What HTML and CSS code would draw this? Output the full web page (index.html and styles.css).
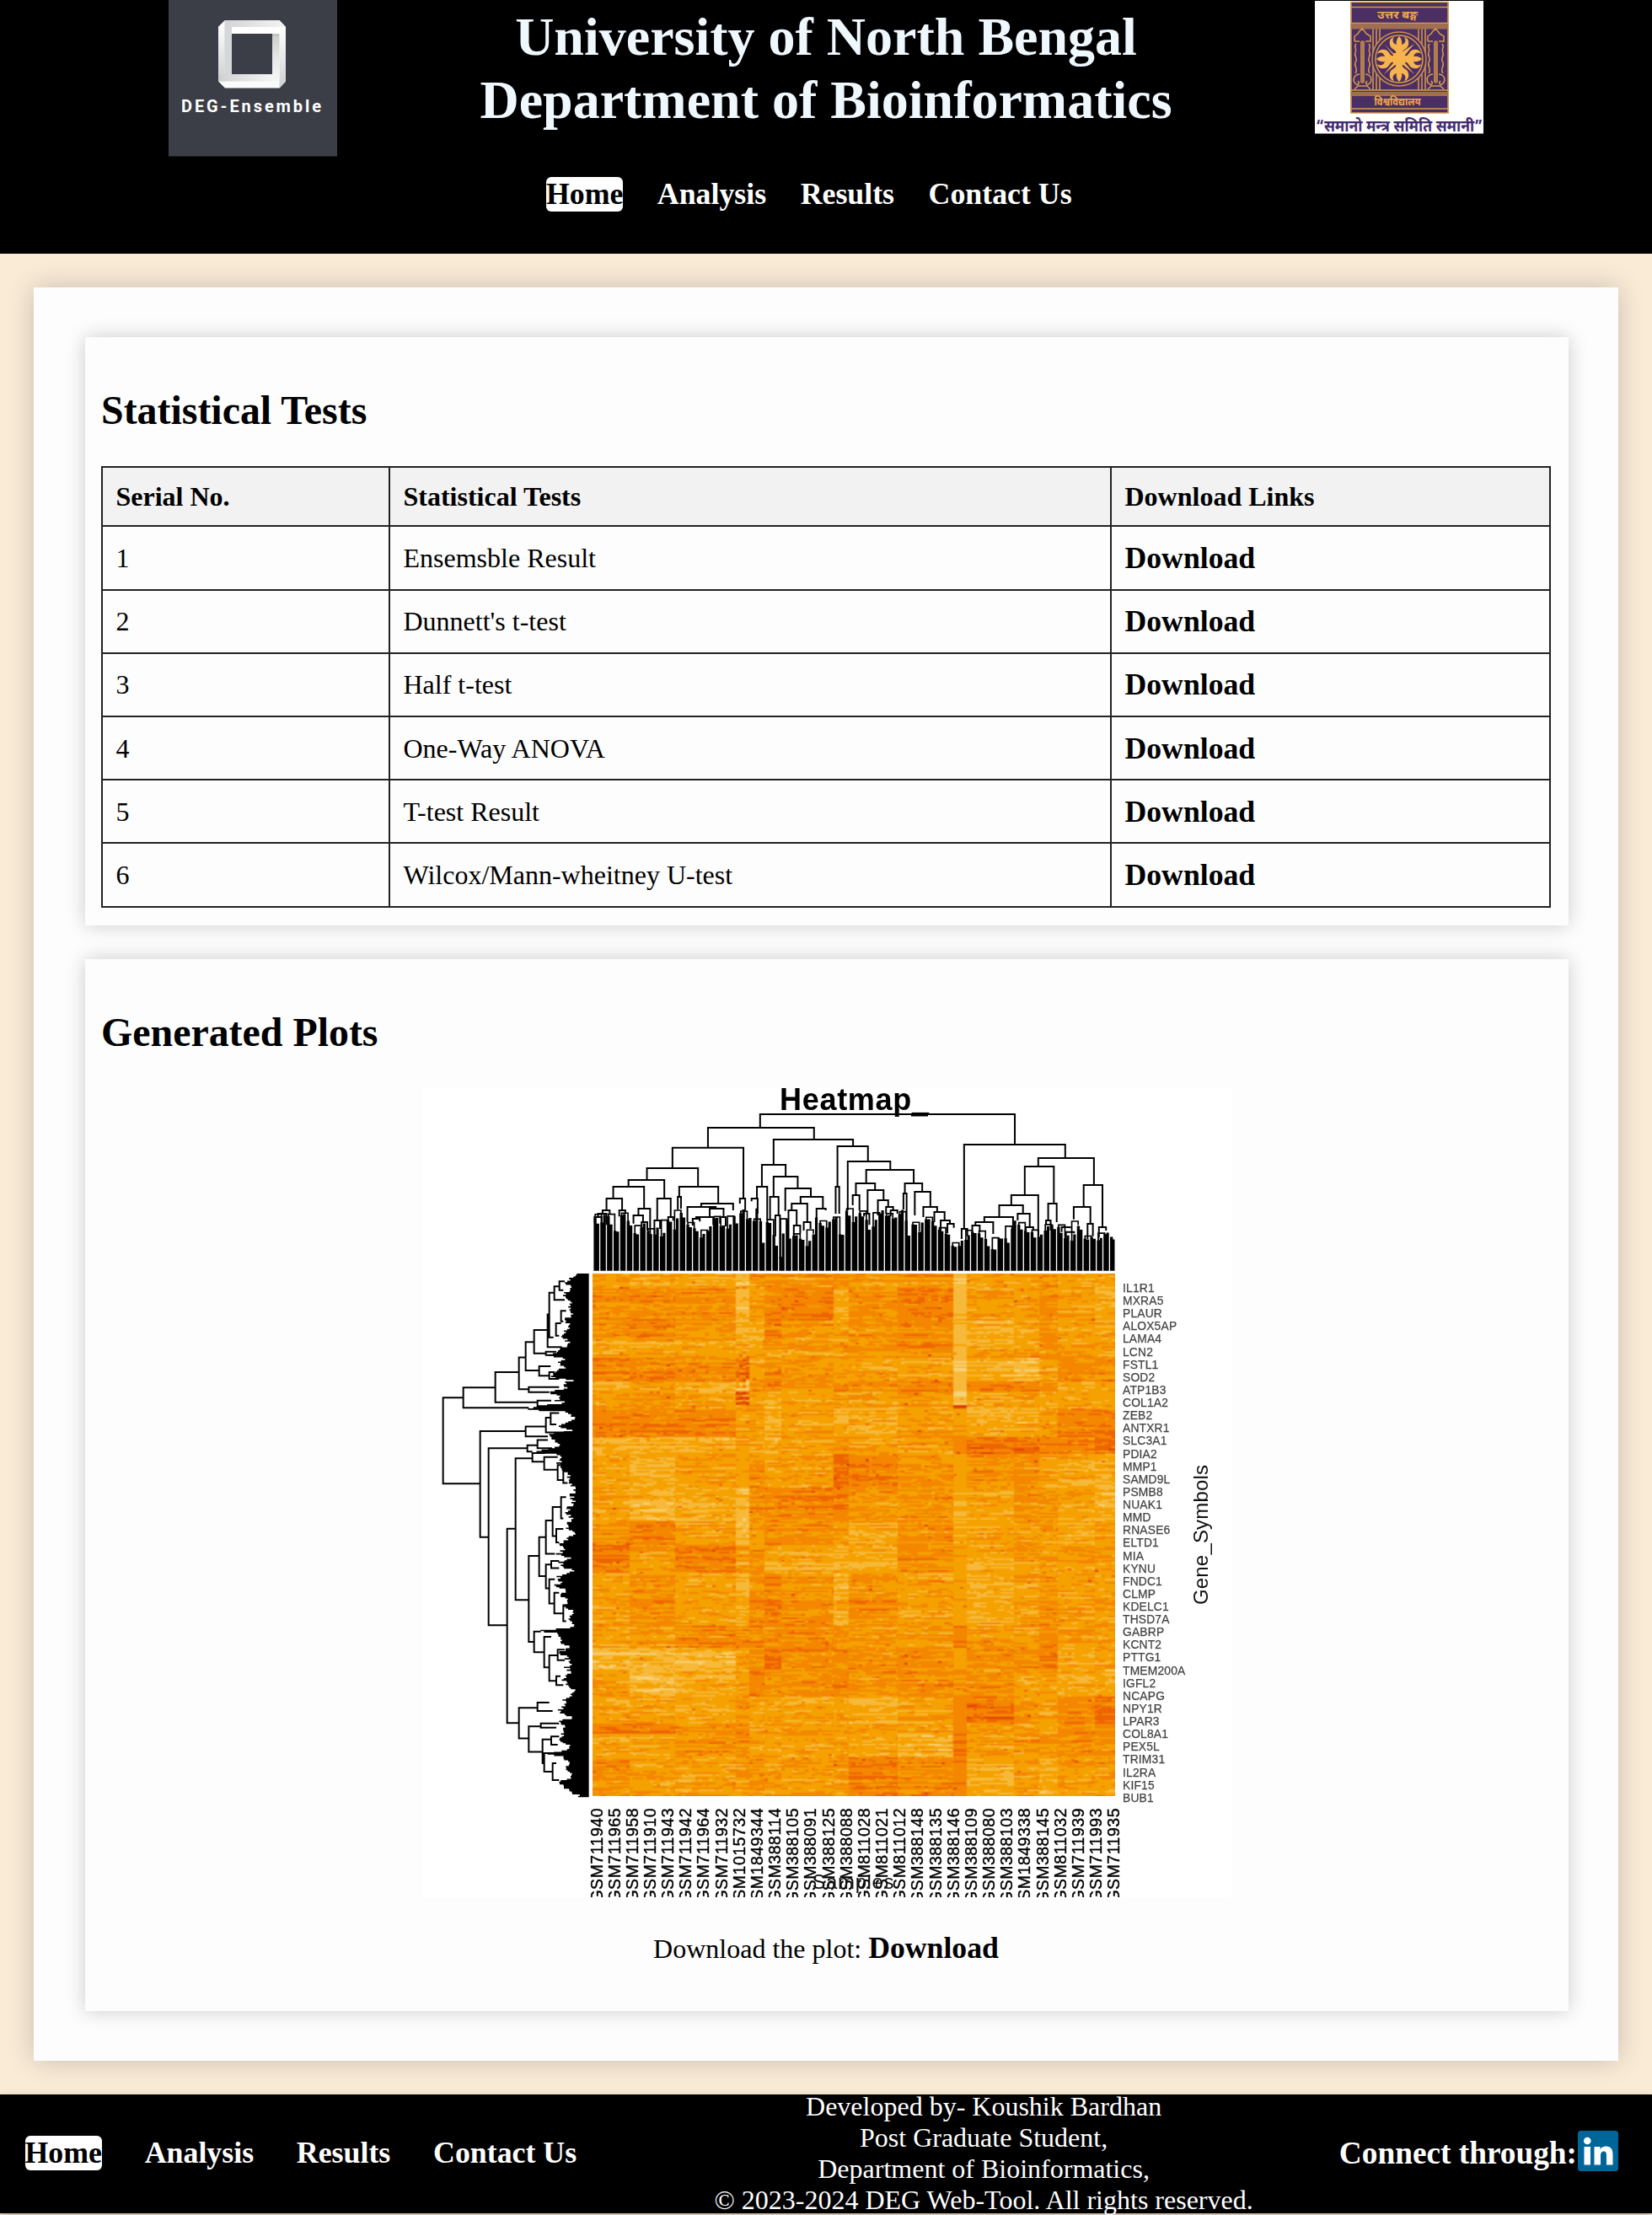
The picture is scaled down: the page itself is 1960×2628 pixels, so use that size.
FILE: index.html
```html
<!DOCTYPE html>
<html lang="en">
<head>
<meta charset="utf-8">
<title>DEG-Ensemble Results</title>
<link rel="stylesheet" href="styles.css">
</head>
<body>
<header class="header">
  <div class="brand">
    <svg class="logo" viewBox="0 0 200 185.5" role="img" aria-label="DEG-Ensemble">
      <defs>
        <linearGradient id="g1"><stop offset="0" stop-color="#d0d0d3"/><stop offset="1" stop-color="#f4f4f4"/></linearGradient>
        <linearGradient id="g2" x2="0" y2="1"><stop offset="0" stop-color="#fff"/><stop offset="1" stop-color="#cfd0d2"/></linearGradient>
        <linearGradient id="g3" x2="0" y2="1"><stop offset="0" stop-color="#cacbcd"/><stop offset=".5" stop-color="#e6e7e8"/><stop offset="1" stop-color="#f6f7f7"/></linearGradient>
      </defs>
      <rect width="200" height="185.5" fill="#3b3e47"/>
      <path d="M67 24H131.500L139 32V96.500L131.500 104.500H67L59 96.500V32Z" fill="#fafbfb"/>
      <path d="M67 24H131.500L139 32H66.500V88L59 96.500V32Z" fill="url(#g1)"/>
      <path d="M59 32L66.500 25V96.500H59Z" fill="url(#g2)"/>
      <path d="M66.500 32H75V88H66.500Z" fill="#d6d7d9"/>
      <path d="M75 32H139V40H75Z" fill="#fff"/>
      <path d="M131.500 32H139V96.500L131.500 104.500Z" fill="url(#g2)"/>
      <path d="M123 40H131.500V96.500H123Z" fill="url(#g3)"/>
      <path d="M123 40H131V43H123Z" fill="#c1c2c4"/>
      <path d="M59 88H123V96.500H59Z" fill="url(#g1)"/>
      <rect x="75" y="40" width="48" height="48" fill="#3b3e47"/>
      <text x="15" y="133" class="logo-text" textLength="166">DEG-Ensemble</text>
    </svg>
    <h1 class="title">University of North Bengal<br>Department of Bioinformatics</h1>
    <svg class="emblem" viewBox="0 0 200 157.5" role="img" aria-label="University emblem">
      <rect width="200" height="157.500" fill="#fff"/>
      <rect x="42.500" y="1" width="116" height="132" fill="#4b2e63"/>
      <g fill="none" stroke="#d69a48" stroke-width="1.500">
        <path d="M43 1.500V133H158V1.500M43 1.500H158M43 7.500H158M43 26.500H158M43 106H158M43 128H158"/>
        <path d="M69 33V106M73 33V106M77 33V106M123 33V106M127 33V106M131 33V106"/>
      </g>
      <path d="M43 27H158V33.500H43ZM43 108H158V113H43Z" fill="#a06f52"/>
      <circle cx="100" cy="69" r="32" fill="#4b2e63" stroke="#c98d49" stroke-width="1.500"/>
      <circle cx="100" cy="69" r="28" fill="#4b2e63" stroke="#d69a48" stroke-width="1.500"/>
      <g fill="#f7b34d">
        <path id="arm" d="M97 70L96 60C94 57 90 57 89 52C88 47 90 44 94 43C91 47 93 51 97 52C96 48 98 44 100 42C102 44 104 48 103 52C107 51 109 47 106 43C110 44 112 47 111 52C110 57 106 57 104 60L103 70Z"/>
        <use href="#arm" transform="rotate(90 100 69)"/><use href="#arm" transform="rotate(180 100 69)"/><use href="#arm" transform="rotate(270 100 69)"/>
        <path d="M93 62H107V76H93Z"/>
        <path d="M82 51L97 66L100 63L118 51L103 69L118 87L100 72L82 87L97 69Z"/>
      </g>
      <g fill="none" stroke="#d69a48" stroke-width="1.500">
        <g id="pillar"><path d="M47 48V42L51 39L53 36L56 33L59 36L61 39L66 42V48H60M47 48H53M55 48V97M58 48V97M49 51C45 55 51 57 48 61C46 66 52 68 48 73C46 78 52 80 48 86M64 51C68 55 62 57 65 61C67 66 61 68 65 73C67 78 61 80 65 86M53 87C45 88 45 95 48 98C51 101 54 98 51 95M60 87C68 88 68 95 65 98C62 101 59 98 62 95M47 105L51 101H62L66 105"/></g>
        <use href="#pillar" transform="translate(87 0)"/>
      </g>
      <path d="M55.500 47H57.500V98H55.500ZM142.500 47H144.500V98H142.500Z" fill="#b17d4c"/>
      <text x="98" y="21" class="emblem-small" textLength="48" lengthAdjust="spacingAndGlyphs">उत्तर बङ्ग</text>
      <text x="98" y="124" class="emblem-small" textLength="55" lengthAdjust="spacingAndGlyphs">विश्वविद्यालय</text>
      <text x="100" y="154.500" class="emblem-motto" textLength="198" lengthAdjust="spacingAndGlyphs">“समानो मन्त्र समिति समानी”</text>
    </svg>
  </div>
  <nav class="nav nav-top"><a class="active">Home</a><a>Analysis</a><a>Results</a><a>Contact Us</a></nav>
</header>

<main class="main">
  <section class="card">
    <h2>Statistical Tests</h2>
    <table class="tests">
      <colgroup><col class="c1"><col class="c2"><col class="c3"></colgroup>
      <tr><th>Serial No.</th><th>Statistical Tests</th><th>Download Links</th></tr>
      <tr><td>1</td><td>Ensemsble Result</td><td><a>Download</a></td></tr>
      <tr><td>2</td><td>Dunnett's t-test</td><td><a>Download</a></td></tr>
      <tr><td>3</td><td>Half t-test</td><td><a>Download</a></td></tr>
      <tr><td>4</td><td>One-Way ANOVA</td><td><a>Download</a></td></tr>
      <tr><td>5</td><td>T-test Result</td><td><a>Download</a></td></tr>
      <tr><td>6</td><td>Wilcox/Mann-wheitney U-test</td><td><a>Download</a></td></tr>
    </table>
  </section>
  <section class="card plots">
    <h2>Generated Plots</h2>
    <div class="plot">
      <canvas id="heat" class="heat" width="310" height="310"></canvas>
      <svg class="overlay" viewBox="501 1290 960 961">
        <path id="top-tree" class="tree" transform="translate(680 1280) scale(.42091 .33333)"/>
        <path id="top-leaves" transform="translate(680 1280) scale(.42091 .33333)"/>
        <path id="side-tree" class="tree" transform="translate(500 1490) scale(.33333 .42091)"/>
        <path id="side-leaves" transform="translate(500 1490) scale(.33333 .42091)"/>
        <text x="925" y="1317" class="plot-title" textLength="177">Heatmap_</text>
        <path d="M1081 1323.500H1101" class="tree"/>
        <g id="genes" class="genes"></g>
        <g id="samples" class="samples"></g>
        <text x="1012" y="2241" class="axis" text-anchor="middle" textLength="97">Samples</text>
        <text class="axis" transform="translate(1433 1904) rotate(-90)" textLength="166">Gene_Symbols</text>
      </svg>
    </div>
    <p class="caption">Download the plot: <a>Download</a></p>
  </section>
</main>

<footer class="footer">
  <nav class="nav nav-bottom"><a class="active">Home</a><a>Analysis</a><a>Results</a><a>Contact Us</a></nav>
  <p class="credits">Developed by- Koushik Bardhan<br>Post Graduate Student,<br>Department of Bioinformatics,<br>© 2023-2024 DEG Web-Tool. All rights reserved.</p>
  <div class="connect">Connect through:
    <svg class="linkedin" viewBox="0 0 48 48" role="img" aria-label="LinkedIn"><rect width="48" height="48" rx="3.500" fill="#069"/><circle cx="11.300" cy="12" r="4.300" fill="#fff"/><path d="M7.500 19H15V40.500H7.500ZM19.500 19H26.500V22C28 19.800 30.300 18.400 33.500 18.400C39.500 18.400 41.500 22.200 41.500 28.300V40.500H34V29.500C34 26.500 33.500 24.500 31 24.500C28 24.500 27 26.600 27 29.500V40.500H19.500Z" fill="#fff"/></svg>
  </div>
</footer>
<script src="plot.js"></script>
</body>
</html>
```
FILE: styles.css
```css
* { box-sizing: border-box; }
body { margin: 0; background: #faebd7; color: #000; font: 32px "Liberation Serif", "Times New Roman", serif; height: 2628px; overflow: hidden; }
.header { height: 300.6px; background: #000; display: flex; flex-direction: column; }
.brand { display: flex; justify-content: space-between; align-items: flex-start; padding: 0 200px; height: 209.500px; }
.logo { width: 200px; height: 185.5px; display: block; }
.logo-text { font: bold 20px Roboto, sans-serif; fill: #fff; }
.emblem { width: 200px; height: 157.5px; display: block; margin-top: 1px; }
.emblem-small { font: bold 13px "Noto Sans Devanagari", "Noto Sans", sans-serif; fill: #f0a94a; text-anchor: middle; }
.emblem-motto { font: bold 19px "Noto Sans Devanagari", "Noto Sans", sans-serif; fill: #432a70; text-anchor: middle; }
.title { margin: 6px 0 0; font-size: 64px; line-height: 75px; text-align: center; color: aliceblue; }
.nav { display: flex; font-size: 35.800px; font-weight: bold; line-height: 41px; color: #fff; }
.nav a { border-radius: 6px; }
.nav .active { background: #fff; color: #000; }
.nav-top { justify-content: center; gap: 40.500px; padding-right: 40.500px; }
.main { margin: 40px; height: 2104px; padding: 59.400px 59px 0 61px; background: #fdfdfd; box-shadow: 0 0 30px rgba(0, 0, 0, .2); }
.card { height: 698px; padding: 20px; background: #fdfdfd; box-shadow: 0 0 22px rgba(0, 0, 0, .2); }
.card h2 { margin: 39px 0 38.500px; font-size: 47.900px; line-height: 55px; text-indent: -1px; }
.tests { width: 1720px; margin: 39.500px 0 0 -1px; border-collapse: collapse; table-layout: fixed; text-align: left; }
.tests th, .tests td { border: 2px solid #222; padding: 1px 16px 0 15.500px; height: 75.200px; }
.tests th { height: 70px; padding-top: 0; background: #f2f2f2; }
.tests a { line-height: 40px; vertical-align: 1px; }
.c1 { width: 341px; }
.c2 { width: 856px; }
.card a { font-size: 35.700px; font-weight: bold; }
.plots { margin-top: 40px; height: 1248.500px; }
.plot { width: 960px; height: 961px; margin: 0 auto; background: #fff; display: grid; overflow: hidden; }
.heat { grid-area: 1 / 1; width: 620px; height: 620px; margin: 221px 0 0 202px; }
.overlay { grid-area: 1 / 1; width: 960px; height: 961px; }
.tree { fill: none; stroke: #000; stroke-width: 2px; vector-effect: non-scaling-stroke; }
.plot-title { font: bold 36px "Liberation Sans", Arial, sans-serif; }
.axis { font: 24px "Liberation Sans", Arial, sans-serif; fill: #111; }
.genes { font: 13.800px "Liberation Sans", Arial, sans-serif; letter-spacing: .2px; fill: #444; stroke: #444; stroke-width: .25px; }
.samples { font: 19.500px "Liberation Sans", Arial, sans-serif; letter-spacing: .5px; fill: #000; stroke: #000; stroke-width: .4px; text-anchor: end; }
.caption { margin: 39px 0 0; line-height: 42px; text-align: center; text-indent: -2px; }
.footer { height: 141.500px; background: #000; color: #fff; display: flex; align-items: center; padding: 0 40px 0 29.500px; box-shadow: 0 4px 10px rgba(0, 0, 0, .25); }
.nav-bottom { gap: 50.800px; margin-top: -2px; }
.credits { margin: 0 0 0 161.500px; width: 643px; text-align: center; line-height: 37px; white-space: nowrap; }
.connect { margin-left: auto; display: flex; align-items: center; font-size: 37.300px; font-weight: bold; white-space: nowrap; margin-top: -2px; }
.linkedin { width: 48px; height: 48px; margin: -5px 0 0 1px; }
```
FILE: plot.js
```js
let seed = 7;
const rnd = () => ((seed = (seed * 16807) % 2147483647) / 2147483647);
const interp = (pts, v) => {
  for (let i = 1; i < pts.length; i++) {
    if (v <= pts[i][0]) {
      const [a, b] = pts[i - 1], [c, d] = pts[i];
      return b + (d - b) * (v - a) / (c - a);
    }
  }
  return pts[pts.length - 1][1];
};
const pairs = s => s.trim().split(/\s+/).map(p => p.split(',').map(Number));

// Column dendrogram: left x, right x, merge height, left end, right end
const columnTree = pairs(`527,1245,126,174,234 380,679,174,245,216 280,480,245,318,426 208,352,318,360,384
156,257,360,384,426 113,200,384,426,462 94,138,426,468,468 237,275,426,504,492 299,409,384,420,444
295,304,420,465,462 361,451,444,456,468 322,402,456,510,462 385,424,462,490,492 470,485,426,444,468
565,789,216,306,240 532,599,306,384,348 518,547,384,426,504 565,633,348,420,390 555,579,420,504,486
598,670,390,470,420 641,704,420,444,462 616,660,444,468,510 745,831,240,384,294 740,750,384,480,480
774,894,294,468,324 826,960,324,372,372 797,851,372,414,396 788,807,414,450,468 830,875,396,480,432
859,888,432,486,456 935,984,372,408,402 931,940,408,465,550 963,1007,402,486,456 987,1026,456,492,474
1102,1387,234,534,282 1311,1468,282,312,378 1273,1355,312,414,444 1235,1311,414,450,560
1201,1268,450,492,480 1159,1240,492,510,560 1134,1184,510,522,552 1339,1363,444,504,510
1253,1287,480,504,528 1439,1492,378,456,528 1411,1458,456,500,516 1482,1502,528,565,540
83,103,468,480,482 70,94,480,492,520 61,80,492,515,520 130,147,468,490,480 184,217,462,486,570
170,197,486,515,510 193,209,510,540,540 229,245,504,560,534 268,282,492,520,505 347,395,492,498,520
337,357,498,522,508 414,430,492,515,525 503,520,426,436,480 570,583,486,560,640 607,630,468,570,522
622,640,522,560,550 650,669,510,540,534 686,712,462,520,468 820,835,480,490,520 1018,1047,474,510,504
1036,1062,504,545,516 1055,1073,516,550,530 1095,1111,534,570,560 1125,1146,522,548,545 1276,1297,528,545,540
1377,1401,528,545,532 1389,1412,545,570,550 1450,1465,516,570,560 1333,1346,504,516,540 882,902,456,480,468 895,914,468,490,480`);
document.getElementById('top-tree').setAttribute('d',
  columnTree.map(([a, b, y, l, r]) => `M${a} ${l}V${y}H${b}V${r}`).join(''));

const topEdge = pairs(`59,495 78,520 94,468 113,545 125,540 138,468 160,515 180,560 200,510 222,570 237,530 250,560
270,500 285,530 299,465 320,510 338,530 360,560 380,545 400,490 415,515 435,530 451,490 465,530 475,450 490,500
510,500 525,430 531,620 547,500 558,510 570,590 585,640 598,468 610,570 630,555 645,575 660,590 675,560 685,490
700,520 715,530 725,495 740,490 757,580 770,468 788,515 805,470 820,490 840,550 855,495 875,470 890,490 910,500
930,460 945,555 960,500 975,540 987,490 1010,510 1035,550 1055,550 1072,600 1085,595 1102,570 1115,560 1130,540
1160,575 1185,610 1205,560 1225,580 1245,500 1265,545 1285,545 1305,565 1325,545 1345,525 1365,530 1385,560
1405,570 1425,510 1445,575 1465,565 1485,570 1510,545 1527,575`);
let leaves = '';
for (let i = 0; i < 79; i++) {
  const x = 58 + i * 18.66, w = i === 78 ? 13 : 15.5;
  const l = interp(topEdge, x + 3) + rnd() * 16 - 8, r = interp(topEdge, x + 11) + rnd() * 16 - 8;
  leaves += `M${x} 683V${l}H${x + 8}V${r}H${x + w}V683Z`;
  if (i % 2 === 0 && i < 78) {
    const n = interp(topEdge, x + 22), y = Math.min(l, n) - 10;
    leaves += `M${x + 2} ${l}V${y}H${x + 24}V${n + 6}H${x + 20}V${y + 5}H${x + 6}V${l}Z`;
  }
}
document.getElementById('top-leaves').setAttribute('d', leaves);

// Row dendrogram: merge x, upper y, lower y, upper end, lower end
const rowTree = pairs(`77,400,642,149,209 149,371,428,263,382 263,328,413,347,413 347,286,376,371,382
371,243,323,401,419 401,209,275,449,443 449,165,257,455,500 455,104,230,473,470 473,86,124,491,510
491,72,97,510,505 443,270,280,480,480 419,311,338,460,455 455,328,347,475,490 382,370,384,490,455
413,408,424,462,480 209,494,793,371,239 371,481,509,443,450 443,456,498,460,530 460,443,475,490,480
239,542,1041,377,305 377,534,552,413,395 413,519,542,450,465 305,769,1317,335,347 335,571,970,395,382
395,556,580,440,437 437,567,603,485,485 485,590,632,500,505 382,846,1088,419,401 419,793,903,443,443
443,746,840,467,475 467,708,790,497,480 497,680,740,515,505 480,770,808,505,490 443,870,937,462,455
455,912,980,475,473 473,950,1008,490,505 401,1059,1117,425,437 437,1074,1160,462,455 455,1126,1198,485,480
347,1274,1360,413,382 413,1259,1283,455,467 382,1326,1398,425,431 425,1318,1330,490,480 431,1363,1430,462,437
437,1402,1454,480,467 467,1430,1478,480,490 497,155,185,515,505 479,190,225,497,490 505,985,1030,515,515
485,1110,1140,510,510 480,1185,1210,495,505 462,860,880,490,490 462,1355,1378,490,485 505,605,640,520,520`);
document.getElementById('side-tree').setAttribute('d',
  rowTree.map(([x, a, b, u, l]) => `M${u} ${a}H${x}V${b}H${l}`).join(''));
const sideEdge = pairs(`50,550 60,525 75,510 90,520 105,505 125,510 130,530 150,520 165,530 180,505 195,525 210,510
225,480 240,520 257,500 270,485 280,450 290,512 300,480 311,505 325,465 340,465 350,525 360,495 370,520 380,465
385,455 395,490 405,470 412,520 420,430 428,382 433,382 436,490 445,520 455,535 470,505 480,480 490,530 500,445
515,450 525,480 540,470 552,380 558,470 570,495 585,480 600,490 615,515 630,520 645,530 660,540 675,525 690,545
705,520 720,510 735,530 750,520 765,505 780,540 795,520 810,490 825,500 840,480 850,520 860,490 875,490 885,535
900,480 915,490 925,475 940,500 955,495 970,520 985,510 1000,535 1015,520 1030,520 1045,535 1053,425 1057,425
1060,470 1075,490 1090,500 1100,530 1115,490 1130,510 1145,525 1160,510 1175,530 1190,495 1205,510 1220,535
1240,520 1250,490 1260,510 1275,490 1285,480 1300,530 1310,490 1320,505 1335,490 1350,500 1365,480 1380,530
1395,495 1402,440 1410,490 1425,520 1440,515 1455,520 1470,530 1480,490 1495,505 1510,530 1520,555 1527,560`);
let edge = 'M596 50';
for (let y = 50; y < 1526; y += 4) edge += `H${interp(sideEdge, y) + rnd() * 22 - 5}V${Math.min(y + 4, 1527)}`;
document.getElementById('side-leaves').setAttribute('d', edge + 'H596Z');

// Labels
const svgText = (parent, attrs, value) => {
  const t = document.createElementNS('http://www.w3.org/2000/svg', 'text');
  for (const k in attrs) t.setAttribute(k, attrs[k]);
  t.textContent = value;
  document.getElementById(parent).append(t);
};
`IL1R1 MXRA5 PLAUR ALOX5AP LAMA4 LCN2 FSTL1 SOD2 ATP1B3 COL1A2 ZEB2 ANTXR1 SLC3A1 PDIA2 MMP1 SAMD9L PSMB8 NUAK1 MMD
RNASE6 ELTD1 MIA KYNU FNDC1 CLMP KDELC1 THSD7A GABRP KCNT2 PTTG1 TMEM200A IGFL2 NCAPG NPY1R LPAR3 COL8A1 PEX5L TRIM31
IL2RA KIF15 BUB1`.split(/\s+/).forEach((g, i) => svgText('genes', { x: 1332, y: 1533 + i * 15.12 }, g));
`711940 711965 711958 711910 711943 711942 711964 711932 1015732 1849344 388114 388105 388091 388125 388088 811028
811021 811012 388148 388135 388146 388109 388080 388103 1849338 388145 811032 711939 711993 711935`.split(/\s+/)
  .forEach((s, i) => svgText('samples', { transform: `translate(${714.5 + i * 21.16} 2145) rotate(-90)` }, 'GSM' + s));

// Heatmap: block means (rows by column clusters) with row streaks and cell noise
const xs = [703, 747, 801, 873, 889, 907, 927, 989, 1007, 1065, 1131, 1147, 1203, 1233, 1255, 1299, 1323];
const ys = [50, 85, 180, 238, 260, 285, 350, 380, 430, 507, 558, 650, 745, 815, 895, 1040, 1105, 1165, 1243, 1318, 1345, 1410, 1524];
const means = `4442555545144544 5552456356244543 5653365455234544 3333455556233544 4455434455255554 6656455444132455
3432565656266534 5545434444144444 6664434334433466 3334434544677667 4344544765455433 4332566655345543 5642465435344434
6464533335434444 4543565354434544 4455555544644544 2224575555455634 4234655655554433 4445444434675467 6655444444544355
4455444443745555 5444544465634344`.split(/\s+/);
const palette = ['#f9d27a', '#f7b93a', '#f5a100', '#f48600', '#ee6400', '#df4000', '#a81800'];
const ctx = document.getElementById('heat').getContext('2d');
for (let y = 0; y < 310; y++) {
  const zy = 50 + y * 4.755;
  const r = ys.findIndex(v => v > zy) - 1;
  const rowNoise = (rnd() - .5) * .8;
  for (let c = 0; c < 16; c++) {
    const x0 = (xs[c] - 703) / 2, x1 = (xs[c + 1] - 703) / 2;
    const streak = (rnd() - .5) * .9 + rowNoise + .15;
    let run = 0;
    for (let x = x0; x < x1; x += 2) {
      if (rnd() < .45) run = (rnd() - .5) * 1.4;
      let v = means[r][c] / 2 + streak + run;
      if (c === 3 && zy > 265 && zy < 370) v += (rnd() - .4) * 3;
      if (c === 3 && zy > 380 && zy < 425) v = (y % 3 ? 4 : 1) + rnd() * 2;
      if (c === 10) v = means[r][c] / 2 + streak * .7;
      if (c === 10 && zy > 420 && zy < 430) v = 5;
      if (rnd() < .006) v += 1.6;
      ctx.fillStyle = palette[Math.max(0, Math.min(6, Math.round(v)))];
      ctx.fillRect(x, y, Math.min(2, x1 - x), 1);
    }
  }
}
```
